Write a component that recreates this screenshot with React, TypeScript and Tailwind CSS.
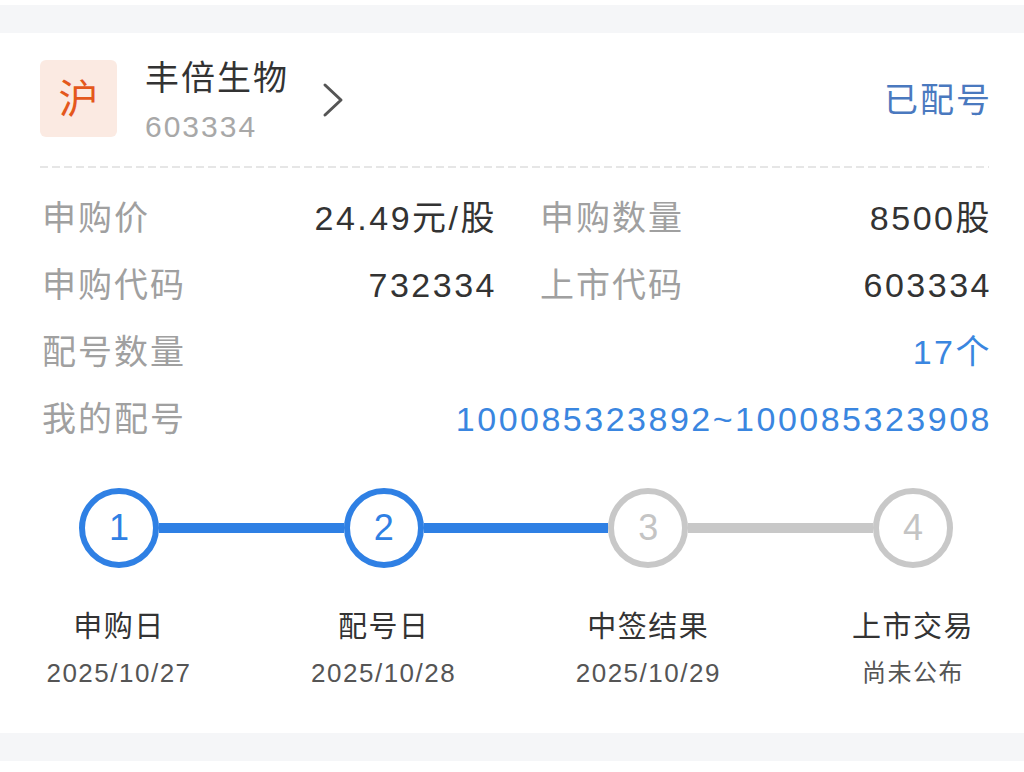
const FONT = "font-['Liberation_Sans','Noto_Sans_CJK_SC',sans-serif]";

const rows = [
  { l1: '申购价', v1: '24.49元/股', l2: '申购数量', v2: '8500股' },
  { l1: '申购代码', v1: '732334', l2: '上市代码', v2: '603334' },
];

const steps = [
  { n: 1, title: '申购日', sub: '2025/10/27', done: true },
  { n: 2, title: '配号日', sub: '2025/10/28', done: true },
  { n: 3, title: '中签结果', sub: '2025/10/29', done: false },
  { n: 4, title: '上市交易', sub: '尚未公布', done: false },
];

function Circle({ n, done }: { n: number; done: boolean }) {
  return (
    <div
      className={`w-[80px] h-[80px] rounded-full border-[6px] flex items-center justify-center text-[36px] leading-none shrink-0 ${
        done ? 'border-[#2f80e4] text-[#2f80e4]' : 'border-[#c8c8c8] text-[#c4c4c4]'
      }`}
    >
      {n}
    </div>
  );
}

export default function App() {
  return (
    <div className={`w-[1024px] h-[772px] bg-white overflow-hidden ${FONT}`}>
      <div className="h-[5px]" />
      <div className="h-[28px] bg-[#f5f6f8]" />

      <div className="h-[700px] pl-[40px] pr-[32px] pt-[27px]">
        {/* header */}
        <div className="flex items-start">
          <div className="w-[77px] h-[77px] rounded-[6px] bg-[#fbeae2] flex items-center justify-center text-[40px] text-[#e4581c] leading-none">
            沪
          </div>
          <div className="ml-[28px] mt-[-2px]">
            <div className="text-[34px] leading-[40px] text-[#333] tracking-[2px]">丰倍生物</div>
            <div className="mt-[12px] text-[30px] leading-[34px] text-[#a8a8a8] tracking-[2px]">603334</div>
          </div>
          <svg className="ml-[32px] mt-[22px]" width="24" height="36" viewBox="0 0 24 36">
            <path d="M4 3 L20 18 L4 33" fill="none" stroke="#555" strokeWidth="3" strokeLinecap="round" strokeLinejoin="round" />
          </svg>
          <div className="ml-auto mt-[20px] text-[34px] leading-[40px] text-[#4a79bf] tracking-[2px]">已配号</div>
        </div>

        <div className="mt-[22px] h-[2px] mr-[3px] bg-[repeating-linear-gradient(90deg,#e6e6e6_0_8px,transparent_8px_12px)]" />

        {/* info rows */}
        <div className="mt-[17px] pl-[2px]">
          {rows.map((r) => (
            <div key={r.l1} className="h-[67px] flex items-center text-[34px]">
              <div className="w-[455px] flex justify-between">
                <span className="text-[#a0a0a0] tracking-[2px]">{r.l1}</span>
                <span className="text-[#333] tracking-[2.5px]">{r.v1}</span>
              </div>
              <div className="ml-[43px] flex-1 flex justify-between">
                <span className="text-[#a0a0a0] tracking-[2px]">{r.l2}</span>
                <span className="text-[#333] tracking-[2.5px]">{r.v2}</span>
              </div>
            </div>
          ))}
          <div className="h-[67px] flex items-center justify-between text-[34px]">
            <span className="text-[#a0a0a0] tracking-[2px]">配号数量</span>
            <span className="text-[#3a86e0] tracking-[2.5px]">17个</span>
          </div>
          <div className="h-[67px] flex items-center justify-between text-[34px]">
            <span className="text-[#a0a0a0] tracking-[2px]">我的配号</span>
            <span className="text-[#3a86e0] tracking-[2.5px]">100085323892~100085323908</span>
          </div>
        </div>

        {/* progress */}
        <div className="mt-[35px] ml-[39px] w-[874px] flex items-center">
          {steps.map((s, i) => (
            <div key={s.n} className={`flex items-center ${i < steps.length - 1 ? 'flex-1' : ''}`}>
              <Circle n={s.n} done={s.done} />
              {i < steps.length - 1 && (
                <div className={`flex-1 h-[10px] ${i < 2 ? 'bg-[#2f80e4]' : 'bg-[#c8c8c8]'}`} />
              )}
            </div>
          ))}
        </div>

        <div className="mt-[41px] w-[954px] flex justify-between ml-[-1px]">
          {steps.map((s) => (
            <div key={s.n} className="w-[160px] flex flex-col items-center">
              <div className="text-[29px] leading-[36px] text-[#333] tracking-[1.5px]">{s.title}</div>
              <div
                className={`mt-[13px] leading-[30px] text-[#555] tracking-[1.5px] ${
                  s.sub.includes('/') ? 'text-[26px]' : 'text-[24px]'
                }`}
              >
                {s.sub}
              </div>
            </div>
          ))}
        </div>
      </div>

      <div className="h-[28px] bg-[#f5f6f8]" />
    </div>
  );
}
